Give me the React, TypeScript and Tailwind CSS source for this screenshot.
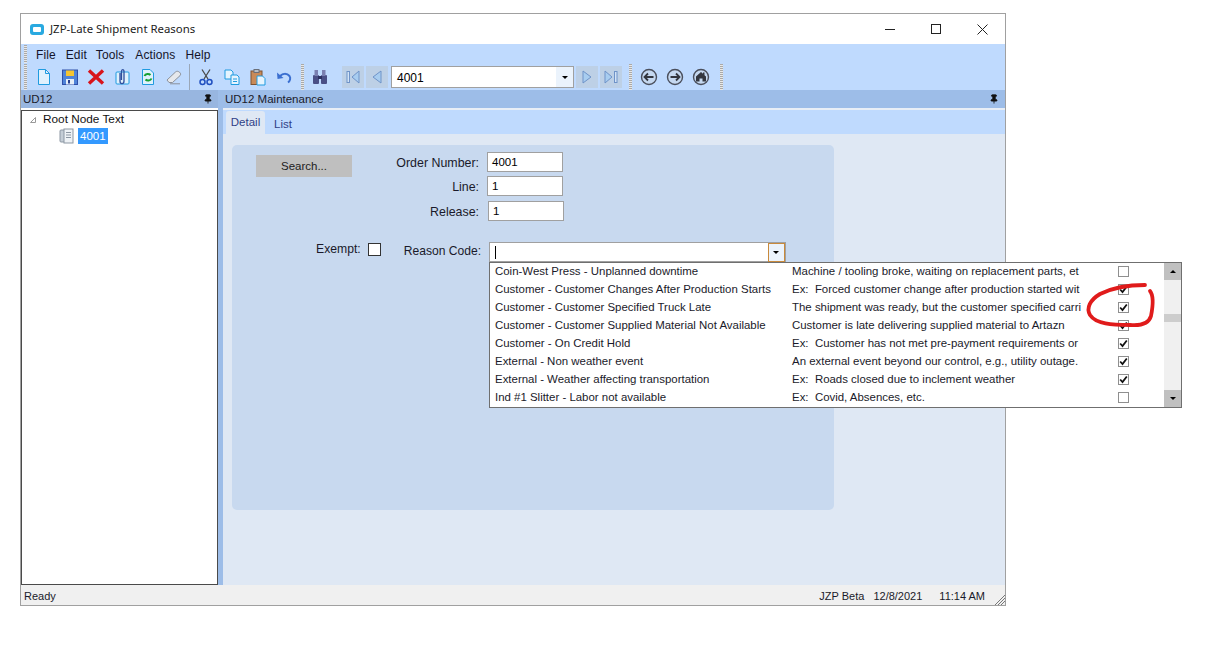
import React from "react";
import { Pin } from "lucide-react";

const rows = [
  { code: "Coin-West Press - Unplanned downtime", desc: "Machine / tooling broke, waiting on replacement parts, et", on: false },
  { code: "Customer - Customer Changes After Production Starts", desc: "Ex:  Forced customer change after production started wit", on: true },
  { code: "Customer - Customer Specified Truck Late", desc: "The shipment was ready, but the customer specified carri", on: true },
  { code: "Customer - Customer Supplied Material Not Available", desc: "Customer is late delivering supplied material to Artazn", on: true },
  { code: "Customer - On Credit Hold", desc: "Ex:  Customer has not met pre-payment requirements or", on: true },
  { code: "External - Non weather event", desc: "An external event beyond our control, e.g., utility outage.", on: true },
  { code: "External - Weather affecting transportation", desc: "Ex:  Roads closed due to inclement weather", on: true },
  { code: "Ind #1 Slitter - Labor not available", desc: "Ex:  Covid, Absences, etc.", on: false },
];

const Grip = () => (
  <div className="w-[3px] h-[26px] bg-[repeating-linear-gradient(to_bottom,#a9a9a9_0px,#a9a9a9_1px,#e8e8e8_1px,#e8e8e8_2px)]" />
);

const Tool = ({ children }: { children: React.ReactNode }) => (
  <div className="w-[26px] h-[24px] flex items-center justify-center shrink-0">{children}</div>
);

const Nav = ({ children }: { children: React.ReactNode }) => (
  <div className="w-[22px] h-[22px] bg-[#bdd0e6] flex items-center justify-center shrink-0">{children}</div>
);

const Ic = ({ children }: { children: React.ReactNode }) => (
  <svg width="18" height="18" viewBox="0 0 18 18" fill="none">
    {children}
  </svg>
);

const CircleIcon = ({ children }: { children: React.ReactNode }) => (
  <svg width="18" height="18" viewBox="0 0 18 18" fill="none">
    <circle cx="9" cy="9" r="7.5" stroke="#4a4f5c" strokeWidth="1.4" fill="#c5d8f0" />
    {children}
  </svg>
);

const Field = ({ value, className }: { value: string; className: string }) => (
  <div className={"h-[20px] w-[76px] bg-white border border-[#a0a0a0] px-1 text-[11.5px] leading-[18px] text-black " + className}>
    {value}
  </div>
);

const Check = ({ on }: { on: boolean }) => (
  <div className="w-[11px] h-[11px] border border-[#8f8f8f] bg-white flex items-center justify-center">
    {on && (
      <svg width="9" height="9" viewBox="0 0 9 9" fill="none">
        <path d="M1.2 4.5 L3.5 7 L7.8 1.5" stroke="#111" strokeWidth="1.8" />
      </svg>
    )}
  </div>
);

export default function App() {
  return (
    <div className="relative h-[646px] w-[1227px] overflow-hidden bg-white pl-[20px] pt-[13px] font-['Liberation_Sans',sans-serif] text-[12px] text-[#1a1a2a]">
      <div className="w-[986px] h-[593px] border border-[#a0a0a0] flex flex-col bg-white">
        {/* title bar */}
        <div className="h-[30px] flex items-center shrink-0 pl-[9px]">
          <div className="w-[14px] h-[11px] rounded-[3px] bg-[#29a9e0] flex items-center justify-center">
            <div className="w-[8px] h-[5px] rounded-[1px] bg-white" />
          </div>
          <span className="ml-[6px] font-['Noto_Sans',sans-serif] text-[11.4px] text-[#222]">JZP-Late Shipment Reasons</span>
          <div className="ml-auto flex items-center">
            <div className="w-[46px] flex justify-center"><div className="w-[10px] h-px bg-[#222]" /></div>
            <div className="w-[46px] flex justify-center"><div className="w-[10px] h-[10px] border border-[#222]" /></div>
            <div className="w-[46px] flex justify-center">
              <svg width="11" height="11" viewBox="0 0 11 11"><path d="M0.5 0.5 L10.5 10.5 M10.5 0.5 L0.5 10.5" stroke="#222" strokeWidth="1" /></svg>
            </div>
          </div>
        </div>

        {/* menu + toolbar */}
        <div className="h-[46px] bg-[#bfdafe] shrink-0 flex flex-col">
          <div className="h-[20px] flex items-center pl-[3px]">
            <div className="w-[3px] h-[18px] bg-[repeating-linear-gradient(to_bottom,#a9a9a9_0px,#a9a9a9_1px,#e8e8e8_1px,#e8e8e8_2px)]" />
            <div className="ml-[9px] pt-[2px] flex gap-[10px] text-[12px] tracking-[0.1px] text-[#14142a]">
              <span>File</span><span>Edit</span><span className="-ml-px">Tools</span><span className="ml-px">Actions</span><span>Help</span>
            </div>
          </div>
          <div className="h-[26px] flex items-center pl-[3px]">
            <Grip />
            <div className="ml-[4px] flex items-center">
              <Tool>
                <Ic><path d="M3.5 1.5 H10.5 L14.5 5.5 V16.5 H3.5 Z" fill="#dff1fd" stroke="#1f9be0" /><path d="M10.5 1.5 V5.5 H14.5" stroke="#1f9be0" /></Ic>
              </Tool>
              <Tool>
                <Ic><rect x="1.5" y="2" width="15" height="14.5" fill="#4f83d8" stroke="#2f4fa8" /><rect x="5" y="2.5" width="8" height="5.5" fill="#f6c531" /><rect x="5" y="11" width="8" height="5.5" fill="#e6eef7" /><rect x="7" y="12" width="2" height="3.5" fill="#27408f" /></Ic>
              </Tool>
              <Tool>
                <Ic><path d="M2 2.5 L16 15.5 M16 2.5 L2 15.5" stroke="#d8141c" strokeWidth="3.4" /></Ic>
              </Tool>
              <Tool>
                <Ic><rect x="3" y="4" width="13" height="12" rx="1" fill="#dff1fd" stroke="#1f9be0" /><path d="M7 5 V13 C7 16.5 11 16.5 11 13 V3.5 C11 1 8.5 1 8.5 3.5 V12" stroke="#2d4f9e" strokeWidth="1.3" /></Ic>
              </Tool>
              <Tool>
                <Ic><path d="M3.5 1.5 H11 L14.5 5 V16.5 H3.5 Z" fill="#dff1fd" stroke="#1f9be0" /><path d="M5.5 8 C6.5 5.5 10 5.5 11.5 7 M12.5 10.5 C11.5 13 8 13 6.5 11.5" stroke="#15a033" strokeWidth="2" /></Ic>
              </Tool>
              <Tool>
                <Ic><path d="M2 12 L10.5 4 C11.5 3 13 3 14.5 4.2 C16 5.5 15.8 6.8 15 7.7 L7.5 14.5 H4 Z" fill="#e6e8ec" stroke="#8c919a" /><path d="M5 15.8 H15" stroke="#8c919a" /></Ic>
              </Tool>
              <div className="ml-[2px] mr-[3px] w-px h-[26px] bg-[#9aa7b8]" />
              <Tool>
                <Ic><path d="M5 1.5 L11 11 M13 1.5 L7 11" stroke="#4a4a4a" strokeWidth="1.3" /><circle cx="5.5" cy="14" r="2.5" stroke="#1f4fc0" strokeWidth="1.5" /><circle cx="12.5" cy="14" r="2.5" stroke="#1f4fc0" strokeWidth="1.5" /></Ic>
              </Tool>
              <Tool>
                <Ic><path d="M2 2 H8 L10 4 V11 H2 Z" fill="#e6f4fe" stroke="#1f9be0" /><path d="M8 7 H14 L16 9 V16.5 H8 Z" fill="#e6f4fe" stroke="#1f9be0" /><path d="M10 11 H14 M10 13.5 H14" stroke="#1f9be0" /></Ic>
              </Tool>
              <Tool>
                <Ic><rect x="2" y="3" width="11" height="13.5" fill="#c98a58" stroke="#7c5232" /><rect x="5" y="1.5" width="5" height="3" fill="#b9bec6" stroke="#6b6f78" /><path d="M8 8 H13.5 L16 10.5 V17 H8 Z" fill="#e6f4fe" stroke="#1f9be0" /></Ic>
              </Tool>
              <Tool>
                <Ic><path d="M4.5 9 C7 5 12 5 14.5 8 C16 10 15 13 13 14.5" stroke="#3b6fd0" strokeWidth="2" /><path d="M2 4.5 L2.5 11 L8.5 10 Z" fill="#3b6fd0" /></Ic>
              </Tool>
              <div className="ml-[4px]"><Grip /></div>
              <div className="ml-[3px]">
                <Tool>
                  <Ic><rect x="2" y="7" width="6" height="9" rx="1" fill="#4a4f86" /><rect x="10" y="7" width="6" height="9" rx="1" fill="#4a4f86" /><rect x="3.5" y="2" width="3.5" height="6" fill="#7a7fb0" /><rect x="11" y="2" width="3.5" height="6" fill="#7a7fb0" /><rect x="7" y="8" width="4" height="3" fill="#2d3060" /></Ic>
                </Tool>
              </div>
              <div className="ml-[9px] flex items-center gap-[2px]">
                <Nav>
                  <svg width="14" height="14" viewBox="0 0 14 14" fill="none"><rect x="1" y="1.5" width="2.5" height="11" fill="#d3e4f7" stroke="#6f93c8" /><path d="M13 1 L6 7 L13 13 Z" fill="#a8cdf0" stroke="#6f93c8" /></svg>
                </Nav>
                <Nav>
                  <svg width="14" height="14" viewBox="0 0 14 14" fill="none"><path d="M11 1 L3 7 L11 13 Z" fill="#a8cdf0" stroke="#6f93c8" /></svg>
                </Nav>
                <div className="ml-[1px] w-[183px] h-[22px] bg-white border border-[#a0a0a0] flex items-center text-[12px] text-black">
                  <span className="pl-[5px] pt-[2px] flex-1">4001</span>
                  <div className="w-[17px] h-full bg-[#ebf3fc] flex items-center justify-center">
                    <div className="w-0 h-0 border-x-[3px] border-x-transparent border-t-[3px] border-t-black" />
                  </div>
                </div>
                <Nav>
                  <svg width="14" height="14" viewBox="0 0 14 14" fill="none"><path d="M3 1 L11 7 L3 13 Z" fill="#a8cdf0" stroke="#6f93c8" /></svg>
                </Nav>
                <Nav>
                  <svg width="14" height="14" viewBox="0 0 14 14" fill="none"><path d="M1 1 L8 7 L1 13 Z" fill="#a8cdf0" stroke="#6f93c8" /><rect x="10.5" y="1.5" width="2.5" height="11" fill="#d3e4f7" stroke="#6f93c8" /></svg>
                </Nav>
              </div>
              <div className="ml-[7px]"><Grip /></div>
              <div className="ml-[8px] flex items-center gap-[8px]">
                <CircleIcon><path d="M13.5 9 H5 M8 5.5 L4.5 9 L8 12.5" stroke="#33363f" strokeWidth="1.8" /></CircleIcon>
                <CircleIcon><path d="M4.5 9 H13 M10 5.5 L13.5 9 L10 12.5" stroke="#33363f" strokeWidth="1.8" /></CircleIcon>
                <CircleIcon><path d="M9 4 L11 5.8 V4.5 H12.5 V7.2 L14 8.5 V13.5 H10.5 V10.5 H7.5 V13.5 H4 V8.5 Z" fill="#33363f" /></CircleIcon>
              </div>
              <div className="ml-[10px]"><Grip /></div>
            </div>
          </div>
        </div>

        {/* panes */}
        <div className="flex-1 flex min-h-0">
          {/* tree pane */}
          <div className="w-[197px] shrink-0 flex flex-col">
            <div className="h-[18px] bg-[#98b6e0] flex items-center justify-between px-[2px] text-[11.5px] shrink-0">
              <span className="pt-[2px]">UD12</span>
              <Pin size={10} className="mr-[3px]" color="#111" fill="#111" />
            </div>
            <div className="flex-1 mt-[2px] bg-white border border-[#4a4a4a] pl-[7px] pt-[2px]">
              <div className="flex items-center h-[14px]">
                <svg width="8" height="8" viewBox="0 0 8 8" fill="none"><path d="M6.5 1.5 V6.5 H1.5 Z" stroke="#9a9a9a" /></svg>
                <span className="ml-[6px] text-[11.8px] text-[#111]">Root Node Text</span>
              </div>
              <div className="flex items-center h-[17px] pl-[30px]">
                <svg width="16" height="16" viewBox="0 0 16 16" fill="none"><rect x="1" y="2" width="5" height="12" rx="1" fill="#c4cdd6" stroke="#8c97a3" /><rect x="5" y="1" width="9" height="14" fill="#eef2f6" stroke="#8c97a3" /><path d="M7 4.5 H12 M7 7 H12 M7 9.5 H12" stroke="#8c97a3" /></svg>
                <span className="ml-[3px] bg-[#3399ff] text-white text-[11.5px] px-[2px] h-[16px] leading-[16px]">4001</span>
              </div>
            </div>
          </div>

          <div className="w-[5px] bg-[#9dbde8] shrink-0" />

          {/* maintenance pane */}
          <div className="flex-1 flex flex-col min-w-0 bg-[#dfe8f4]">
            <div className="h-[18px] bg-[#9dbde8] flex items-center justify-between px-[2px] shrink-0">
              <span className="text-[11.5px] pt-[2px]">UD12 Maintenance</span>
              <Pin size={10} className="mr-[4px]" color="#111" fill="#111" />
            </div>
            <div className="h-[2px] bg-[#e8eef6] shrink-0" />
            <div className="h-[24px] bg-[#bfdafe] flex items-end pl-[3px] shrink-0 text-[11.5px] text-[#2f3f86]">
              <div className="w-[39px] h-[23px] rounded-t-[3px] bg-[#dfe8f4] flex items-center justify-center">Detail</div>
              <div className="ml-[9px] h-[21px] pt-[2px] flex items-center">List</div>
            </div>
            <div className="flex-1 pl-[9px] pt-[11px] min-h-0">
              {/* form */}
              <div className="relative w-[602px] h-[365px] rounded-[5px] bg-[#c8d9ef] pl-[24px] pt-[7px]">
                <div className="flex">
                  <div className="w-[96px] h-[22px] mt-[3px] pt-[2px] bg-[#bfbfbf] flex items-center justify-center text-[11.5px] text-[#222]">Search...</div>
                  <div className="ml-[36px] flex flex-col gap-[4px] text-[12.4px] leading-[14px]">
                    <div className="flex items-center h-[20px]">
                      <span className="w-[92px] pr-px pt-px text-right">Order Number:</span>
                      <Field value="4001" className="ml-[7px]" />
                    </div>
                    <div className="flex items-center h-[20px]">
                      <span className="w-[92px] pr-px pt-[2px] text-right">Line:</span>
                      <Field value="1" className="ml-[7px]" />
                    </div>
                    <div className="flex items-center h-[20px] mt-px">
                      <span className="w-[92px] pr-px pt-px text-right">Release:</span>
                      <Field value="1" className="ml-[8px]" />
                    </div>
                  </div>
                </div>
                <div className="flex mt-[21px]">
                  <div className="ml-[60px] flex items-start">
                    <span className="leading-[14px] text-[12.2px]">Exempt:</span>
                    <div className="ml-[7px] mt-px w-[13px] h-[13px] border border-[#333] bg-white" />
                  </div>
                  <span className="ml-[23px] mt-[2px] w-[78px] leading-[14px] text-[12.1px] whitespace-nowrap">Reason Code:</span>
                  <div className="ml-[7px] w-[297px] h-[20px] bg-white border border-[#a0a0a0] flex items-center justify-between">
                    <div className="ml-[5px] w-px h-[13px] bg-black" />
                    <div className="w-[17px] h-[19px] bg-[#ebf3fc] border border-[#c98a3c] flex items-center justify-center">
                      <div className="w-0 h-0 border-x-[3px] border-x-transparent border-t-[3px] border-t-black" />
                    </div>
                  </div>
                </div>

                {/* dropdown list, hangs over the edge of the window */}
                <div className="absolute left-[257px] top-[117px] w-[693px] h-[146px] bg-white border border-[#6f6f6f] flex">
                  <div className="flex-1 flex flex-col min-w-0 -mt-px">
                    {rows.map((r) => (
                      <div key={r.code} className="h-[18px] flex items-center text-[11.45px] text-[#1a1a2a] whitespace-pre shrink-0">
                        <span className="w-[302px] pl-[5px] pt-[2px]">{r.code}</span>
                        <span className="w-[326px] pt-[2px]">{r.desc}</span>
                        <Check on={r.on} />
                      </div>
                    ))}
                  </div>
                  <div className="w-[17px] bg-[#f0f0f0] flex flex-col shrink-0">
                    <div className="h-[17px] bg-[#c0c0c0] flex items-center justify-center">
                      <div className="w-0 h-0 border-x-[3px] border-x-transparent border-b-[3px] border-b-black" />
                    </div>
                    <div className="mt-[34px] h-[8px] bg-[#cdcdcd]" />
                    <div className="mt-auto h-[17px] bg-[#c0c0c0] flex items-center justify-center">
                      <div className="w-0 h-0 border-x-[3px] border-x-transparent border-t-[3px] border-t-black" />
                    </div>
                  </div>
                </div>
              </div>
            </div>
          </div>
        </div>

        {/* status bar */}
        <div className="h-[20px] bg-[#f0f0f0] shrink-0 flex items-center pl-[3px] pt-[2px] text-[11px] text-[#1a1a2a] relative">
          <span>Ready</span>
          <div className="ml-auto flex items-center mr-[20px]">
            <span>JZP Beta</span>
            <span className="ml-[9px]">12/8/2021</span>
            <span className="ml-[17px]">11:14 AM</span>
          </div>
          <svg className="absolute right-0 bottom-0" width="11" height="11" viewBox="0 0 11 11" fill="none">
            <path d="M1 11 L11 1 M4 11 L11 4 M7 11 L11 7" stroke="#777" />
          </svg>
        </div>
      </div>

      {/* hand drawn red ring around the checkboxes */}
      <svg className="absolute left-0 top-0 pointer-events-none" width="1227" height="646" fill="none">
        <path
          d="M1145 285 C1130 285 1112 288 1100 294 C1090 300 1086 308 1090 315 C1096 324 1112 325 1130 325 C1142 326 1149 323 1151 316 C1153 306 1154 296 1150 291"
          stroke="#e01b1b"
          strokeWidth="3.8"
          strokeLinecap="round"
        />
      </svg>
    </div>
  );
}
